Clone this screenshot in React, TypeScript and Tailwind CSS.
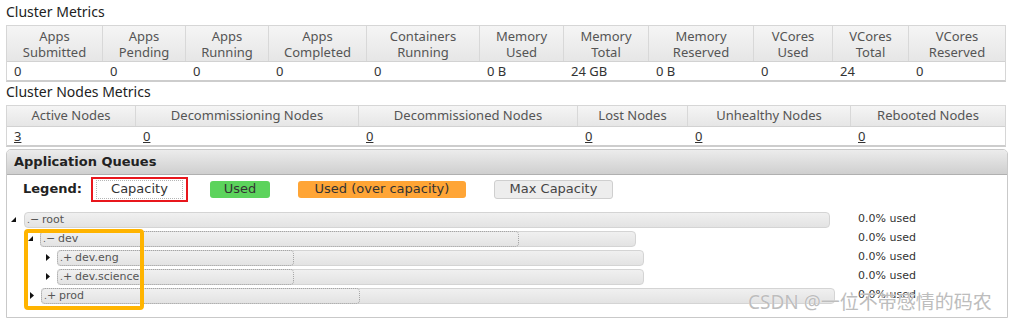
import React from "react";

const h1: [string, string][] = [
  ["Apps", "Submitted"],
  ["Apps", "Pending"],
  ["Apps", "Running"],
  ["Apps", "Completed"],
  ["Containers", "Running"],
  ["Memory", "Used"],
  ["Memory", "Total"],
  ["Memory", "Reserved"],
  ["VCores", "Used"],
  ["VCores", "Total"],
  ["VCores", "Reserved"],
];
const d1 = ["0", "0", "0", "0", "0", "0 B", "24 GB", "0 B", "0", "24", "0"];
const h2 = [
  "Active Nodes",
  "Decommissioning Nodes",
  "Decommissioned Nodes",
  "Lost Nodes",
  "Unhealthy Nodes",
  "Rebooted Nodes",
];
const d2 = ["3", "0", "0", "0", "0", "0"];

const sans = "font-['Noto_Sans','Open_Sans',sans-serif]";
const verdana = "font-['DejaVu_Sans','Verdana',sans-serif]";

function Open() {
  return (
    <svg width="5" height="5" viewBox="0 0 5 5" className="block">
      <path d="M5 0 L5 5 L0 5 Z" fill="#111" />
    </svg>
  );
}
function Closed() {
  return (
    <svg width="4" height="7" viewBox="0 0 4 7" className="block">
      <path d="M0 0 L4 3.5 L0 7 Z" fill="#111" />
    </svg>
  );
}

type Row = {
  name: string;
  open: boolean;
  sign: string;
  indentCls: string;
  gapCls: string;
  width: number;
  cap: number | null;
};

const rows: Row[] = [
  { name: "root", open: true, sign: "−", indentCls: "ml-[4px]", gapCls: "ml-[8px]", width: 806, cap: null },
  { name: "dev", open: true, sign: "−", indentCls: "ml-[21px]", gapCls: "ml-[7px]", width: 596, cap: 479 },
  { name: "dev.eng", open: false, sign: "+", indentCls: "ml-[38px]", gapCls: "ml-[7px]", width: 587, cap: 237 },
  { name: "dev.science", open: false, sign: "+", indentCls: "ml-[38px]", gapCls: "ml-[7px]", width: 587, cap: 237 },
  { name: "prod", open: false, sign: "+", indentCls: "ml-[22px]", gapCls: "ml-[7px]", width: 794, cap: 319 },
];

export default function App() {
  return (
    <div className="relative w-[1014px] h-[324px] bg-white overflow-hidden">
      <div className="pt-[2px] pl-[6px]">
        <div className={`${sans} text-[14px] leading-[20px] text-[#222]`}>Cluster Metrics</div>
        <div className="mt-[3px] w-[1000px] border border-[#d6d6d6] border-b-2 border-b-[#cdcdcd]">
          <div className="grid grid-cols-[96px_83px_83px_98px_113px_84px_85px_105px_79px_76px_96px] border-b border-[#d2d2d2] bg-linear-to-b from-[#f5f5f5] to-[#e6e6e6]">
            {h1.map(([a, b], i) => (
              <div
                key={i}
                className={`${sans} h-[35px] flex flex-col items-center justify-center text-[13px] leading-[16px] text-[#555] ${
                  i < h1.length - 1 ? "border-r border-[#d8d8d8]" : ""
                }`}
              >
                <span>{a}</span>
                <span>{b}</span>
              </div>
            ))}
          </div>
          <div className="grid grid-cols-[96px_83px_83px_98px_113px_84px_85px_105px_79px_76px_96px]">
            {d1.map((v, i) => (
              <div key={i} className={`${sans} h-[18px] leading-[18px] pl-[7px] text-[13px] text-[#333]`}>
                {v}
              </div>
            ))}
          </div>
        </div>

        <div className={`${sans} text-[14px] leading-[20px] text-[#222]`}>Cluster Nodes Metrics</div>
        <div className="mt-[3px] w-[1000px] border border-[#d6d6d6] border-b-2 border-b-[#cdcdcd]">
          <div className="grid grid-cols-[129px_223px_219px_110px_163px_154px] border-b border-[#d2d2d2] bg-linear-to-b from-[#f5f5f5] to-[#e6e6e6]">
            {h2.map((a, i) => (
              <div
                key={i}
                className={`${sans} h-[20px] flex items-center justify-center text-[13px] text-[#555] ${
                  i < h2.length - 1 ? "border-r border-[#d8d8d8]" : ""
                }`}
              >
                {a}
              </div>
            ))}
          </div>
          <div className="grid grid-cols-[129px_223px_219px_110px_163px_154px]">
            {d2.map((v, i) => (
              <div key={i} className={`${sans} h-[18px] leading-[18px] pl-[7px] text-[13px] text-[#333]`}>
                <span className="underline">{v}</span>
              </div>
            ))}
          </div>
        </div>

        <div className="mt-[2px] w-[1002px] h-[169px] border border-[#c9c9c9] rounded-t-[5px]">
          <div className="h-[25px] flex items-center pl-[7px] rounded-t-[4px] border-b border-[#b0b0b0] bg-linear-to-b from-[#ececec] to-[#cfcfcf]">
            <span className={`${verdana} font-bold text-[13px] text-[#222]`}>Application Queues</span>
          </div>

          <div className="flex items-center mt-[2px] pl-[16px] h-[24px]">
            <span className={`${verdana} font-bold text-[13px] text-[#222]`}>Legend:</span>
            <div className="ml-[9px] border-2 border-[#e8161c] px-[3px] py-[1px]">
              <div className={`${verdana} w-[87px] h-[19px] flex items-center justify-center border border-dotted border-[#b5b5b5] bg-white text-[13px] text-[#333]`}>
                Capacity
              </div>
            </div>
            <div className={`${verdana} ml-[22px] w-[60px] h-[17px] flex items-center justify-center rounded-[3px] bg-[#5cd35c] text-[13px] text-[#333]`}>
              Used
            </div>
            <div className={`${verdana} ml-[28px] w-[168px] h-[17px] flex items-center justify-center rounded-[3px] bg-[#ffa536] text-[13px] text-[#333]`}>
              Used (over capacity)
            </div>
            <div className={`${verdana} ml-[28px] w-[119px] h-[19px] flex items-center justify-center rounded-[3px] border border-[#cfcfcf] bg-[#ededed] text-[13px] text-[#444]`}>
              Max Capacity
            </div>
          </div>

          <div className="mt-[9px]">
            {rows.map((r) => (
              <div key={r.name} className="flex items-center h-[19px]">
                <div className="w-[851px] flex items-center">
                  <div className={`${r.indentCls} w-[5px] flex justify-center`}>{r.open ? <Open /> : <Closed />}</div>
                  <div
                    className={`${r.gapCls} relative h-[16px] rounded-[4px] border border-[#d4d4d4] bg-linear-to-b from-[#f0f0f0] to-[#e3e3e3] flex items-center pl-[2px]`}
                    style={{ width: r.width }}
                  >
                    {r.cap !== null && (
                      <div
                        className="absolute left-[-1px] top-[-1px] bottom-[-1px] rounded-[4px] border border-dotted border-[#a5a5a5]"
                        style={{ width: r.cap }}
                      />
                    )}
                    <span className={`${verdana} relative text-[11px] leading-[14px] text-[#555] whitespace-nowrap`}>
                      <span className="text-[9px]">.</span>
                      <span>{r.sign}</span>
                      <span className="ml-[3px]">{r.name}</span>
                    </span>
                  </div>
                </div>
                <span className={`${verdana} text-[11px] text-[#333]`}>0.0% used</span>
              </div>
            ))}
          </div>
        </div>
      </div>

      <div className="absolute left-[24px] top-[229px] w-[120px] h-[81px] border-[4px] border-[#ffb400] rounded-[4px]" />

      <div className="absolute left-[748px] top-[289px] text-[19px] leading-[26px] whitespace-nowrap text-[#bdbdbd] font-['Noto_Sans','Noto_Sans_CJK_SC',sans-serif] [text-shadow:0_0_1px_#ffffff]">
        CSDN @一位不带感情的码农
      </div>
    </div>
  );
}
